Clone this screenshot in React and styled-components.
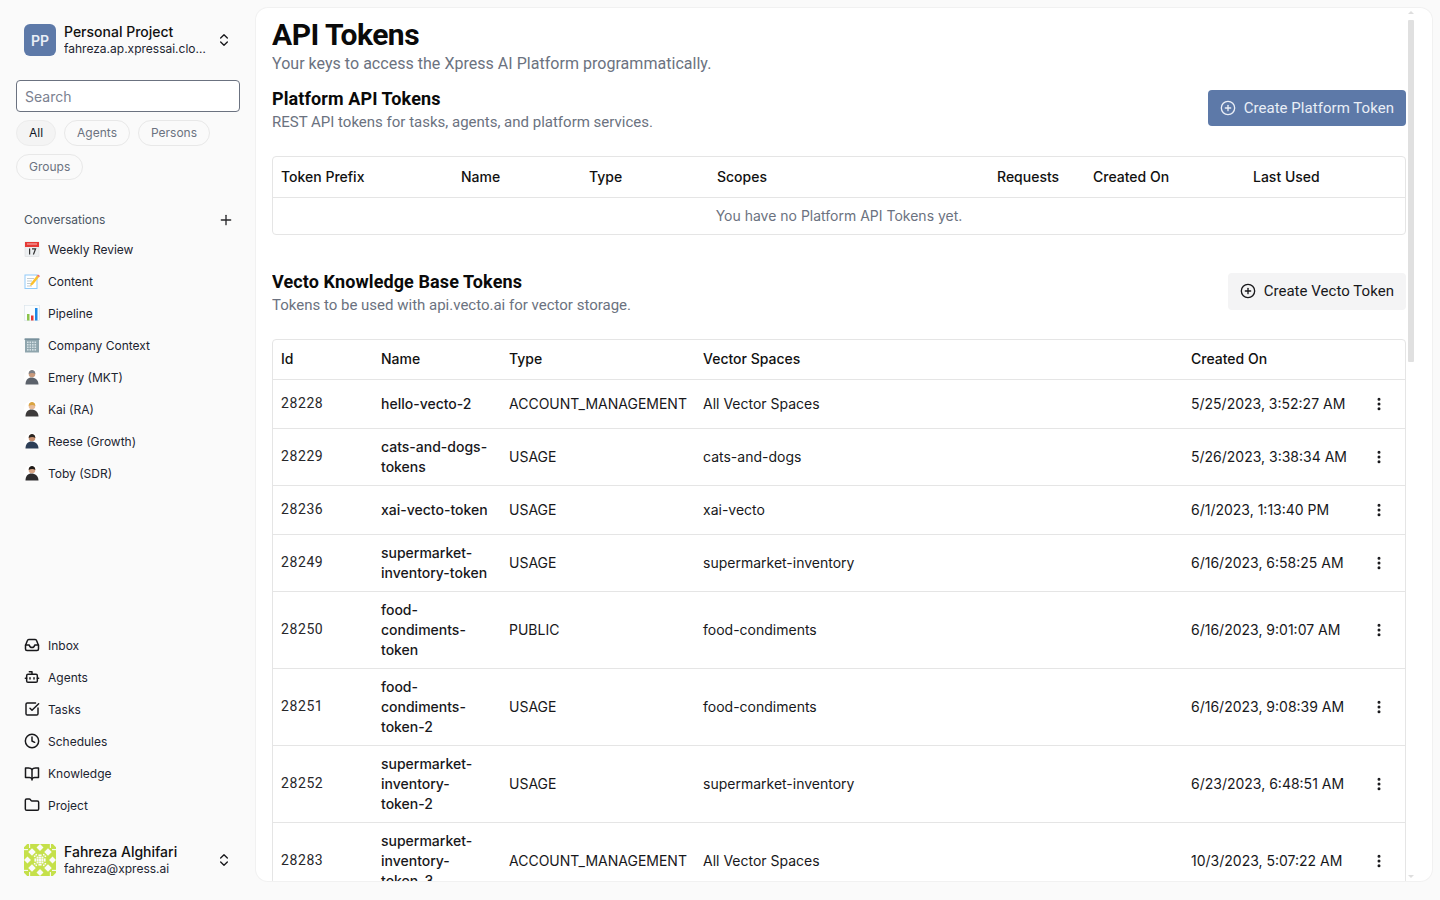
import React from "react";
import styled, { createGlobalStyle } from "styled-components";
import { ChevronsUpDown, Plus, CirclePlus, EllipsisVertical, Clock, SquareCheckBig, Folder, Bot } from "lucide-react";

const GlobalStyle = createGlobalStyle`
    html, body {
        margin: 0;
        height: 100%;
        background: #fafafa;
        color: #111827;
        font-family: Inter, "Liberation Sans", sans-serif;
    }
    * { box-sizing: border-box; }
`;

const Layout = styled.div`
    display: flex;
    width: 1440px;
    height: 900px;
    overflow: hidden;
    background: #fafafa;
`;

const Sidebar = styled.aside`
    width: 256px;
    flex: none;
    display: flex;
    flex-direction: column;
    height: 100%;
    padding-bottom: 24px;
`;

const Account = styled.div`
    display: flex;
    align-items: center;
    gap: 8px;
    padding: 0 24px;
    height: 32px;
    flex: none;
    margin-top: ${(p) => p.$top || 0}px;
`;

const ProjectBadge = styled.div`
    width: 32px;
    height: 32px;
    flex: none;
    border-radius: 6px;
    background: #5d79a8;
    color: #e9eef6;
    display: flex;
    align-items: center;
    justify-content: center;
    font-size: 14px;
    font-weight: 600;
`;

const AccountText = styled.div`
    flex: 1;
    min-width: 0;
`;

const AccountName = styled.div`
    font-size: 14px;
    line-height: 17px;
    font-weight: 500;
    color: #111;
`;

const AccountSub = styled.div`
    margin-top: 1px;
    font-size: 12px;
    line-height: 16px;
    color: #1c2430;
    white-space: nowrap;
    overflow: hidden;
    text-overflow: ellipsis;
`;

const Search = styled.input`
    display: block;
    margin: 24px 16px 0;
    width: 224px;
    height: 32px;
    padding: 0 8px;
    border: 1px solid #6b7280;
    border-radius: 4px;
    background: #fff;
    font-family: inherit;
    font-size: 14px;
    flex: none;
    &::placeholder { color: #7b8190; opacity: 1; }
`;

const Pills = styled.div`
    display: flex;
    flex-wrap: wrap;
    gap: 8px;
    padding: 8px 16px 0;
`;

const Pill = styled.button`
    height: 26px;
    padding: 0 12px 2px;
    border-radius: 13px;
    border: 1px solid ${(p) => (p.$active ? "#ececec" : "#e8e8e8")};
    background: ${(p) => (p.$active ? "#f4f4f4" : "transparent")};
    color: ${(p) => (p.$active ? "#111827" : "#6b7280")};
    font-family: inherit;
    font-size: 12px;
`;

const SectionLabel = styled.div`
    display: flex;
    align-items: center;
    justify-content: space-between;
    margin-top: 29px;
    padding: 0 22px 0 24px;
    height: 20px;
    font-size: 12px;
    color: #4b5563;
    svg { color: #27272a; margin-top: 2px; }
`;

const NavList = styled.nav`
    display: flex;
    flex-direction: column;
    margin-top: ${(p) => p.$top || 0}px;
`;

const BottomNav = styled(NavList)`
    margin-top: auto;
`;

const NavItem = styled.div`
    display: flex;
    align-items: center;
    gap: 8px;
    height: 32px;
    padding: 0 24px;
    font-size: 12px;
    color: #1c2430;
    svg { flex: none; }
`;

const Main = styled.main`
    position: relative;
    width: 1176px;
    height: 873px;
    margin-top: 8px;
    padding: 0 16px;
    background: #fff;
    border-radius: 12px;
    box-shadow: 0 0 0 1px #f1f1f1;
`;

const Scroller = styled.div`
    height: 100%;
    overflow: hidden;
`;

const ScrollTrack = styled.div`
    position: absolute;
    top: 0;
    bottom: 0;
    left: 1150px;
    width: 10px;
    display: flex;
    flex-direction: column;
    align-items: center;
    padding: 3px 0 3px;
`;

const ScrollArrow = styled.div`
    width: 0;
    height: 0;
    border-left: 3px solid transparent;
    border-right: 3px solid transparent;
    ${(p) => (p.$down ? "border-top: 3px solid #dedede; margin-top: auto;" : "border-bottom: 3px solid #dedede;")}
`;

const ScrollThumb = styled.div`
    width: 6px;
    height: 342px;
    margin-top: 6px;
    border-radius: 1px;
    background: #e0e0e0;
`;

const Content = styled.div`
    width: 1134px;
    padding-top: 9px;
`;

const PageTitle = styled.h1`
    margin: 0;
    font-family: Roboto, "Noto Sans", sans-serif;
    font-size: 30px;
    line-height: 36px;
    font-weight: 700;
    letter-spacing: -0.5px;
    color: #0a0a0a;
`;

const PageSub = styled.p`
    margin: 1px 0 0;
    font-family: Roboto, "Noto Sans", sans-serif;
    font-size: 16px;
    line-height: 20px;
    letter-spacing: 0.03px;
    color: #6b7280;
`;

const SectionHead = styled.div`
    display: flex;
    align-items: center;
    justify-content: space-between;
    margin-top: ${(p) => p.$top}px;
    margin-bottom: 24px;
`;

const SectionTitle = styled.h2`
    margin: 1px 0 -1px;
    font-family: Roboto, "Noto Sans", sans-serif;
    font-size: 18px;
    line-height: 28px;
    font-weight: 700;
    letter-spacing: 0.1px;
    color: #0a0a0a;
`;

const SectionSub = styled.p`
    margin: 0;
    font-family: Roboto, "Noto Sans", sans-serif;
    font-size: 15px;
    line-height: 20px;
    color: #6b7280;
`;

const ActionButton = styled.button`
    display: flex;
    align-items: center;
    gap: 8px;
    height: ${(p) => (p.$primary ? 36 : 37)}px;
    padding: 0 12px;
    border: none;
    border-radius: 4px;
    background: ${(p) => (p.$primary ? "#5d79a8" : "#f4f4f5")};
    color: ${(p) => (p.$primary ? "#e9eef6" : "#18181b")};
    font-family: Roboto, sans-serif;
    font-size: 15px;
    letter-spacing: 0.04px;
`;

const TableWrap = styled.div`
    border: 1px solid #e5e5e5;
    border-radius: 4px;
    overflow: hidden;
`;

const Table = styled.table`
    width: 100%;
    table-layout: fixed;
    border-collapse: collapse;
    font-size: 14px;
    line-height: 20px;
`;

const HeadCell = styled.th`
    padding: ${(p) => (p.$tall ? "10px" : "9px")} 8px 10px;
    text-align: left;
    font-weight: 500;
    color: #111;
    border-bottom: 1px solid #e5e5e5;
`;

const Row = styled.tr`
    &:not(:last-child) td { border-bottom: 1px solid #e5e5e5; }
`;

const Cell = styled.td`
    padding: 8px;
    color: #18181b;
    vertical-align: middle;
`;

const IdCell = styled(Cell)`
    padding-bottom: 10px;
    font-family: Roboto, "Noto Sans", sans-serif;
    letter-spacing: 0.6px;
    color: #27272a;
`;

const NameCell = styled(Cell)`
    padding-right: 12px;
    font-weight: 500;
`;

const EmptyCell = styled.td`
    padding: 8px;
    text-align: center;
    color: #6b7280;
`;

const DotsButton = styled.button`
    display: flex;
    align-items: center;
    justify-content: center;
    width: 32px;
    height: 32px;
    padding: 0;
    border: none;
    background: transparent;
    color: #18181b;
`;

const InboxIcon = () => (
    <svg width="16" height="16" viewBox="0 0 16 16" fill="none" stroke="#18181b" strokeWidth="1.500" strokeLinejoin="round" strokeLinecap="round">
        <path d="M1.500 8.500 3.400 3.500A1.500 1.500 0 0 1 4.800 2.500h6.400a1.500 1.500 0 0 1 1.400 1L14.500 8.500v3.500a1.500 1.500 0 0 1-1.500 1.500H3A1.500 1.500 0 0 1 1.500 12z" />
        <path d="M1.500 8h3.700C5.600 9.700 6.600 10.500 8 10.500s2.400-.8 2.800-2.500h3.700" />
    </svg>
);

const BookIcon = () => (
    <svg width="16" height="16" viewBox="0 0 16 16" fill="none" stroke="#18181b" strokeWidth="1.500" strokeLinejoin="round" strokeLinecap="round">
        <path d="M8 4.500C7.200 3.400 6 3 4.500 3H1.500v9.500h4c1.200 0 2 .4 2.500 1.500.5-1.100 1.300-1.500 2.500-1.500h4V3h-3C10 3 8.800 3.400 8 4.500z" />
        <path d="M8 4.500V15" />
    </svg>
);

const EmojiIcon = ({ kind }) => {
    if (kind === "calendar") {
        return (
            <svg width="16" height="16" viewBox="0 0 16 16">
                <rect x="1" y="1" width="14" height="14.500" fill="#eceff1" stroke="#d5d8da" strokeWidth="0.5" />
                <rect x="1" y="1" width="14" height="5" fill="#e53935" />
                <rect x="3" y="2.500" width="10" height="1" fill="#f8bbbb" />
                <rect x="5" y="7.500" width="1.200" height="6" fill="#333" />
                <path d="M8 7.800h3.600L9.400 13.500" fill="none" stroke="#333" strokeWidth="1.200" />
            </svg>
        );
    }
    if (kind === "memo") {
        return (
            <svg width="16" height="16" viewBox="0 0 16 16">
                <rect x="1" y="2" width="12" height="13.500" fill="#fff" stroke="#90caf9" strokeWidth="1" />
                <path d="M3 5.500h7M3 8h5M3 10.500h4M3 13h5" stroke="#b0bec5" strokeWidth="0.800" />
                <path d="M6 13l1-3 6-7.500 2 1.600-6 7.500z" fill="#fbc02d" />
                <path d="M13 2.500l1-1 2 1.600-1 1.200z" fill="#ef6c6c" />
            </svg>
        );
    }
    if (kind === "chart") {
        return (
            <svg width="16" height="16" viewBox="0 0 16 16">
                <rect x="0.500" y="0.500" width="15" height="15" fill="#fafcfd" stroke="#d7e3ea" strokeWidth="0.600" />
                <rect x="3" y="9" width="2.500" height="6.500" fill="#8bc34a" />
                <rect x="7" y="10.500" width="2.500" height="5" fill="#e53935" />
                <rect x="11" y="3" width="2.500" height="12.500" fill="#1e88e5" />
            </svg>
        );
    }
    return (
        <svg width="16" height="16" viewBox="0 0 16 16">
            <rect x="1" y="1.500" width="14" height="14" fill="#8fa5ad" />
            <rect x="0.500" y="1.500" width="15" height="1.500" fill="#78909c" />
            {[3, 5.500, 8, 10.500].map((x) =>
                [4.500, 7, 9.500, 12].map((y) => <rect key={`${x}-${y}`} x={x} y={y} width="1.600" height="1.600" fill="#d5e0e4" />)
            )}
        </svg>
    );
};

const PersonIcon = ({ hair, skin, body }) => (
    <svg width="16" height="16" viewBox="0 0 16 16">
        <circle cx="8" cy="8" r="8" fill="#fff" />
        <path d="M1.500 15.500c0-4.500 2.500-7 6-7s7 2.500 7 7z" fill={body} />
        <circle cx="8" cy="5" r="3.300" fill={skin} />
        <path d="M4.700 5C4.700 2 6.300 1 8 1s3.300 1 3.300 4C9.500 3.600 7 3.600 4.700 5z" fill={hair} />
    </svg>
);

const cornerCuts = ["0,0 1.200,0 0,1.200", "6,0 4.700,1.300 6,2.600", "0,6 1.300,4.700 2.600,6", "3,1.600 4.400,3 3,4.400 1.600,3"];
const checkers = [[4.700, 4.700], [5.400, 3.900], [3.900, 5.400], [3.700, 4.300], [4.300, 3.700], [5.400, 5.400], [4.700, 5.400], [5.400, 4.700]];

const IdenticonQuadrant = ({ transform }) => (
    <g transform={transform}>
        <rect width="6" height="6" fill="#c5e04a" />
        {cornerCuts.map((points) => <polygon key={points} points={points} fill="#fafafa" />)}
        {checkers.map(([x, y]) => <rect key={`${x}-${y}`} x={x} y={y} width="0.600" height="0.600" fill="#fafafa" />)}
        <rect x="1.900" y="0" width="0.400" height="1.500" fill="#fafafa" />
        <rect x="0" y="1.900" width="1.500" height="0.400" fill="#fafafa" />
    </g>
);

const Identicon = () => (
    <svg width="32" height="32" viewBox="0 0 12 12" style={{ flex: "none" }}>
        <IdenticonQuadrant transform="" />
        <IdenticonQuadrant transform="translate(12 0) scale(-1 1)" />
        <IdenticonQuadrant transform="translate(0 12) scale(1 -1)" />
        <IdenticonQuadrant transform="translate(12 12) scale(-1 -1)" />
    </svg>
);

const conversations = [
    { label: "Weekly Review", icon: <EmojiIcon kind="calendar" /> },
    { label: "Content", icon: <EmojiIcon kind="memo" /> },
    { label: "Pipeline", icon: <EmojiIcon kind="chart" /> },
    { label: "Company Context", icon: <EmojiIcon kind="office" /> },
    { label: "Emery (MKT)", icon: <PersonIcon hair="#7b7f86" skin="#c99a7c" body="#5c626b" /> },
    { label: "Kai (RA)", icon: <PersonIcon hair="#d9a441" skin="#e8bb98" body="#3d3a3a" /> },
    { label: "Reese (Growth)", icon: <PersonIcon hair="#2b2622" skin="#c9906f" body="#2c3e57" /> },
    { label: "Toby (SDR)", icon: <PersonIcon hair="#1e1a18" skin="#d8a585" body="#2e2c2e" /> },
];

const navItems = [
    { label: "Inbox", icon: <InboxIcon /> },
    { label: "Agents", icon: <Bot size={16} strokeWidth={2.2} color="#18181b" /> },
    { label: "Tasks", icon: <SquareCheckBig size={16} strokeWidth={2.2} color="#18181b" /> },
    { label: "Schedules", icon: <Clock size={16} strokeWidth={2.2} color="#18181b" /> },
    { label: "Knowledge", icon: <BookIcon /> },
    { label: "Project", icon: <Folder size={16} strokeWidth={2.2} color="#18181b" /> },
];

const platformColumns = [
    ["Token Prefix", 180],
    ["Name", 128],
    ["Type", 128],
    ["Scopes", 280],
    ["Requests", 96],
    ["Created On", 160],
    ["Last Used", 160],
];

const vectoColumns = [
    ["Id", 100],
    ["Name", 128],
    ["Type", 194],
    ["Vector Spaces", 488],
    ["Created On", 172],
    ["", 50],
];

const tokens = [
    ["28228", "hello-vecto-2", "ACCOUNT_MANAGEMENT", "All Vector Spaces", "5/25/2023, 3:52:27 AM"],
    ["28229", "cats-and-dogs-tokens", "USAGE", "cats-and-dogs", "5/26/2023, 3:38:34 AM"],
    ["28236", "xai-vecto-token", "USAGE", "xai-vecto", "6/1/2023, 1:13:40 PM"],
    ["28249", "supermarket-inventory-token", "USAGE", "supermarket-inventory", "6/16/2023, 6:58:25 AM"],
    ["28250", "food-condiments-token", "PUBLIC", "food-condiments", "6/16/2023, 9:01:07 AM"],
    ["28251", "food-condiments-token-2", "USAGE", "food-condiments", "6/16/2023, 9:08:39 AM"],
    ["28252", "supermarket-inventory-token-2", "USAGE", "supermarket-inventory", "6/23/2023, 6:48:51 AM"],
    ["28283", "supermarket-inventory-token-3", "ACCOUNT_MANAGEMENT", "All Vector Spaces", "10/3/2023, 5:07:22 AM"],
];

const App = () => {
    return (
        <>
            <GlobalStyle />
            <Layout>
                <Sidebar>
                    <Account $top={24}>
                        <ProjectBadge>PP</ProjectBadge>
                        <AccountText>
                            <AccountName>Personal Project</AccountName>
                            <AccountSub>fahreza.ap.xpressai.cloud</AccountSub>
                        </AccountText>
                        <ChevronsUpDown size={16} color="#18181b" />
                    </Account>
                    <Search placeholder="Search" />
                    <Pills>
                        <Pill $active>All</Pill>
                        <Pill>Agents</Pill>
                        <Pill>Persons</Pill>
                        <Pill>Groups</Pill>
                    </Pills>
                    <SectionLabel>
                        <span>Conversations</span>
                        <Plus size={16} />
                    </SectionLabel>
                    <NavList $top={4}>
                        {conversations.map((item) => (
                            <NavItem key={item.label}>
                                {item.icon}
                                {item.label}
                            </NavItem>
                        ))}
                    </NavList>
                    <BottomNav>
                        {navItems.map((item) => (
                            <NavItem key={item.label}>
                                {item.icon}
                                {item.label}
                            </NavItem>
                        ))}
                    </BottomNav>
                    <Account $top={23}>
                        <Identicon />
                        <AccountText>
                            <AccountName>Fahreza Alghifari</AccountName>
                            <AccountSub>fahreza@xpress.ai</AccountSub>
                        </AccountText>
                        <ChevronsUpDown size={16} color="#18181b" />
                    </Account>
                </Sidebar>
                <Main>
                    <Scroller>
                        <Content>
                            <PageTitle>API Tokens</PageTitle>
                            <PageSub>Your keys to access the Xpress AI Platform programmatically.</PageSub>
                            <SectionHead $top={10}>
                                <div>
                                    <SectionTitle>Platform API Tokens</SectionTitle>
                                    <SectionSub>REST API tokens for tasks, agents, and platform services.</SectionSub>
                                </div>
                                <ActionButton $primary>
                                    <CirclePlus size={16} />
                                    Create Platform Token
                                </ActionButton>
                            </SectionHead>
                            <TableWrap>
                                <Table>
                                    <colgroup>
                                        {platformColumns.map(([name, width]) => <col key={name} width={width} />)}
                                    </colgroup>
                                    <thead>
                                        <tr>
                                            {platformColumns.map(([name]) => <HeadCell key={name} $tall>{name}</HeadCell>)}
                                        </tr>
                                    </thead>
                                    <tbody>
                                        <Row>
                                            <EmptyCell colSpan={7}>You have no Platform API Tokens yet.</EmptyCell>
                                        </Row>
                                    </tbody>
                                </Table>
                            </TableWrap>
                            <SectionHead $top={32}>
                                <div>
                                    <SectionTitle>Vecto Knowledge Base Tokens</SectionTitle>
                                    <SectionSub>Tokens to be used with api.vecto.ai for vector storage.</SectionSub>
                                </div>
                                <ActionButton>
                                    <CirclePlus size={16} />
                                    Create Vecto Token
                                </ActionButton>
                            </SectionHead>
                            <TableWrap>
                                <Table>
                                    <colgroup>
                                        {vectoColumns.map(([name, width]) => <col key={name} width={width} />)}
                                    </colgroup>
                                    <thead>
                                        <tr>
                                            {vectoColumns.map(([name]) => <HeadCell key={name}>{name}</HeadCell>)}
                                        </tr>
                                    </thead>
                                    <tbody>
                                        {tokens.map(([id, name, type, spaces, created]) => (
                                            <Row key={id}>
                                                <IdCell>{id}</IdCell>
                                                <NameCell>{name}</NameCell>
                                                <Cell>{type}</Cell>
                                                <Cell>{spaces}</Cell>
                                                <Cell>{created}</Cell>
                                                <Cell>
                                                    <DotsButton><EllipsisVertical size={16} strokeWidth={2.500} /></DotsButton>
                                                </Cell>
                                            </Row>
                                        ))}
                                    </tbody>
                                </Table>
                            </TableWrap>
                        </Content>
                    </Scroller>
                    <ScrollTrack>
                        <ScrollArrow />
                        <ScrollThumb />
                        <ScrollArrow $down />
                    </ScrollTrack>
                </Main>
            </Layout>
        </>
    );
};

export default App;
